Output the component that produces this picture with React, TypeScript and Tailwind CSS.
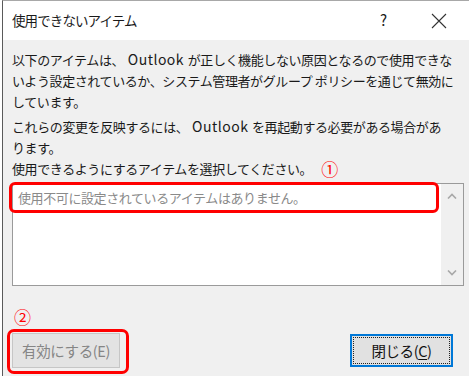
const FONT = '"Noto Sans CJK JP", "Noto Sans", sans-serif'

function CloseX() {
  return (
    <svg width="16" height="16" viewBox="0 0 16 16" className="block">
      <path d="M1 1 L15 15 M15 1 L1 15" stroke="#333" strokeWidth="1.1" fill="none" />
    </svg>
  )
}

function Chevron({ up }: { up?: boolean }) {
  return (
    <svg width="10" height="6" viewBox="0 0 10 6" className="block">
      <path d={up ? 'M1 5.5 L5 1.5 L9 5.5' : 'M1 0.5 L5 4.5 L9 0.5'} stroke="#a8a8a8" strokeWidth="1.6" fill="none" />
    </svg>
  )
}

function Outlook() {
  return <span className="text-[14px] tracking-[0.5px]"> Outlook </span>
}

export default function App() {
  return (
    <div className="w-[469px] h-[376px] bg-white overflow-hidden pl-[2px]" style={{ fontFamily: FONT }}>
      <div className="relative h-full flex flex-col border-l border-t border-l-[#5a5a5a] border-t-[#a8a8a8]">
        {/* title bar */}
        <div className="h-[39px] bg-white flex items-center pl-[9px] pr-[22px] text-[#1a1a1a]">
          <span className="text-[13.5px] tracking-[-0.9px] flex-1">使用できないアイテム</span>
          <span className="text-[15px] mr-[44px]">?</span>
          <CloseX />
        </div>

        {/* body */}
        <div className="flex-1 bg-[#f0f0f0] px-[9px] pt-[9px] text-[13px] leading-[21px] text-[#1a1a1a] tracking-[-0.4px]">
          <p className="whitespace-nowrap">
            以下のアイテムは、<Outlook />が正しく機能しない原因となるので使用できな
            <br />
            いよう設定されているか、システム管理者がグループ ポリシーを通じて無効に
            <br />
            しています。
          </p>
          <p className="mt-[4px] whitespace-nowrap">
            これらの変更を反映するには、<Outlook />を再起動する必要がある場合があ
            <br />
            ります。
          </p>
          <p className="whitespace-nowrap flex items-center">
            使用できるようにするアイテムを選択してください。
            <span className="ml-[9px] text-[17px] leading-[21px] text-[#ff0000]">①</span>
          </p>

          {/* list box */}
          <div className="mt-[4px] w-[452px] h-[103px] border border-[#9a9a9a] bg-white flex">
            <div className="flex-1 pl-[5px] pt-[3px] text-[#8a8a8a] leading-[21px]">
              使用不可に設定されているアイテムはありません。
            </div>
            <div className="w-[22px] bg-[#f0f0f0] flex flex-col items-center justify-between py-[9px]">
              <Chevron up />
              <Chevron />
            </div>
          </div>

          <div className="mt-[21px] ml-[2px] text-[17px] leading-[20px] text-[#ff0000]">②</div>

          {/* buttons */}
          <div className="mt-[6px] flex items-start justify-between pr-[7px]">
            <button className="w-[108px] h-[35px] bg-[#e3e3e3] border border-[#c6c6c6] text-[#858585] text-[14.5px]">
              有効にする(E)
            </button>
            <button className="w-[103px] h-[33px] mt-[1px] bg-[#e1e1e1] border-2 border-[#0078d7] p-[1px] text-[#111] text-[14.5px]">
              <span className="flex h-full w-full items-center justify-center border border-dotted border-[#222]">
                閉じる(<span className="underline underline-offset-2">C</span>)
              </span>
            </button>
          </div>
        </div>

        {/* annotation boxes */}
        <div className="absolute left-[6px] top-[181px] w-[430px] h-[31px] rounded-[6px] border-[3px] border-[#ff0000]" />
        <div className="absolute left-[4px] top-[328px] w-[122px] h-[45px] rounded-[7px] border-[3px] border-[#ff0000]" />
      </div>
    </div>
  )
}
